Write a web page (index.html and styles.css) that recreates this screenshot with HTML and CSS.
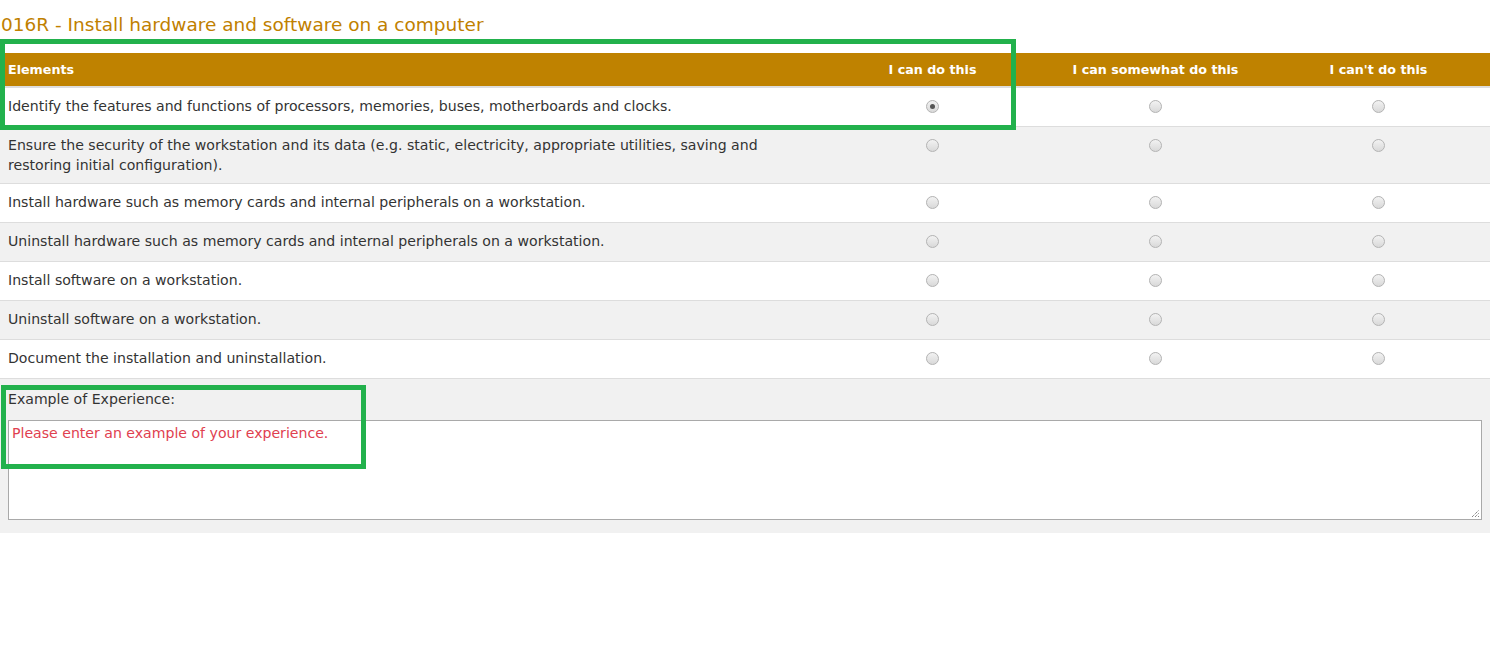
FILE: index.html
```html
<!DOCTYPE html>
<html>
<head>
<meta charset="utf-8">
<link rel="stylesheet" href="styles.css">
</head>
<body>
<div class="page">
  <h2 class="title">016R - Install hardware and software on a computer</h2>
  <table class="grid">
    <colgroup><col class="c-el"><col class="c-opt"><col class="c-opt"><col class="c-opt"></colgroup>
    <thead>
      <tr><th class="th-el">Elements</th><th>I can do this</th><th>I can somewhat do this</th><th>I can't do this</th></tr>
    </thead>
    <tbody>
      <tr><td class="el">Identify the features and functions of processors, memories, buses, motherboards and clocks.</td><td><span class="radio on"></span></td><td><span class="radio"></span></td><td><span class="radio"></span></td></tr>
      <tr class="alt"><td class="el">Ensure the security of the workstation and its data (e.g. static, electricity, appropriate utilities, saving and restoring initial configuration).</td><td><span class="radio"></span></td><td><span class="radio"></span></td><td><span class="radio"></span></td></tr>
      <tr><td class="el">Install hardware such as memory cards and internal peripherals on a workstation.</td><td><span class="radio"></span></td><td><span class="radio"></span></td><td><span class="radio"></span></td></tr>
      <tr class="alt"><td class="el">Uninstall hardware such as memory cards and internal peripherals on a workstation.</td><td><span class="radio"></span></td><td><span class="radio"></span></td><td><span class="radio"></span></td></tr>
      <tr><td class="el">Install software on a workstation.</td><td><span class="radio"></span></td><td><span class="radio"></span></td><td><span class="radio"></span></td></tr>
      <tr class="alt"><td class="el">Uninstall software on a workstation.</td><td><span class="radio"></span></td><td><span class="radio"></span></td><td><span class="radio"></span></td></tr>
      <tr><td class="el">Document the installation and uninstallation.</td><td><span class="radio"></span></td><td><span class="radio"></span></td><td><span class="radio"></span></td></tr>
    </tbody>
  </table>
  <div class="experience">
    <div class="exp-label">Example of Experience:</div>
    <div class="exp-box">
      <div class="exp-text">Please enter an example of your experience.</div>
      <svg class="grip" width="9" height="9" viewBox="0 0 9 9"><path d="M1 8 L8 1 M4 8 L8 4 M7 8 L8 7" stroke="#555" stroke-width="1" stroke-dasharray="1 1" fill="none"/></svg>
    </div>
  </div>
  <div class="mark mark-a"></div>
  <div class="mark mark-b"></div>
</div>
</body>
</html>
```
FILE: styles.css
```css
html, body { margin: 0; padding: 0; background: #fff; }
body { font-family: "DejaVu Sans", Verdana, sans-serif; font-size: 14.1px; color: #333; }
.page { position: relative; width: 1490px; }
.title {
  margin: 0 0 16px 0;
  padding: 13px 0 0 1px;
  font-size: 18.5px;
  line-height: 24px;
  font-weight: normal;
  color: #c08000;
}
.grid { width: 1490px; border-collapse: collapse; table-layout: fixed; }
.c-el { width: 821px; }
.c-opt { width: 223px; }
.grid th {
  background: #bf8200;
  color: #fff;
  font-weight: bold;
  font-size: 12.7px;
  height: 33px;
  padding: 0;
  text-align: center;
  border-bottom: 2px solid #ddd;
}
.grid th.th-el { text-align: left; padding-left: 8px; }
.grid td {
  height: 22px;
  padding: 8px 0;
  line-height: 20px;
  border-bottom: 1px solid #ddd;
  text-align: center;
  vertical-align: top;
}
.grid td.el { text-align: left; padding: 8px 23px 8px 8px; }
.grid tr.alt td { background: #f1f1f1; }
.radio {
  display: inline-block;
  width: 11px; height: 11px;
  border: 1px solid #b4b4b4;
  border-radius: 50%;
  background: linear-gradient(#f2f2f2, #d9d9d9);
  vertical-align: top;
  margin-top: 4px;
  position: relative;
}
.radio.on::after {
  content: "";
  position: absolute;
  left: 3px; top: 3px;
  width: 5px; height: 5px;
  border-radius: 50%;
  background: #555;
}
.experience { background: #f1f1f1; padding: 10px 8px 13px 8px; }
.exp-label { line-height: 20px; margin-bottom: 11px; }
.exp-box {
  position: relative;
  height: 98px;
  border: 1px solid #a9a9a9;
  background: #fff;
}
.exp-text { padding: 4px 3px 2px; line-height: 17px; color: #e0404f; }
.grip { position: absolute; right: 1px; bottom: 1px; }
.mark { position: absolute; border: 5px solid #22b14c; box-sizing: border-box; pointer-events: none; }
.mark-a { left: 0; top: 39px; width: 1016px; height: 91px; }
.mark-b { left: 1px; top: 385px; width: 365px; height: 84px; }
```
